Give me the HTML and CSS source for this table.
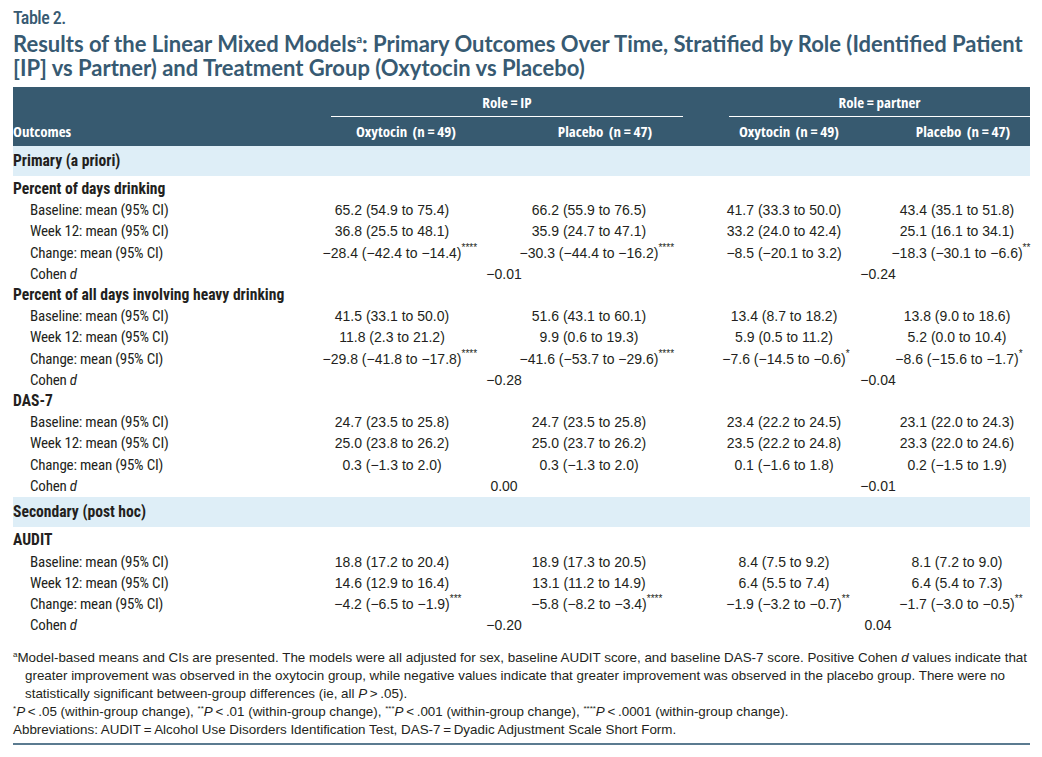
FILE: index.html
```html
<!DOCTYPE html>
<html lang="en">
<head>
<meta charset="utf-8">
<title>Table 2</title>
<link rel="stylesheet" href="styles.css">
</head>
<body>
<div class="page">
  <p class="label">Table 2.</p>
  <h1 class="title">Results of the Linear Mixed Models<sup>a</sup>: Primary Outcomes Over Time, Stratified by Role (Identified Patient<br>[IP] vs Partner) and Treatment Group (Oxytocin vs Placebo)</h1>

  <div class="table">
    <div class="thead">
      <div class="hrow top">
        <div class="grp g1">Role = IP</div>
        <div class="grp g2">Role = partner</div>
      </div>
      <div class="hrow">
        <div class="lab">Outcomes</div>
        <div class="hc c1">Oxytocin&nbsp; (n = 49)</div>
        <div class="hc c2">Placebo&nbsp; (n = 47)</div>
        <div class="hc c3">Oxytocin&nbsp; (n = 49)</div>
        <div class="hc c4">Placebo&nbsp; (n = 47)</div>
      </div>
    </div>

    <div class="band">Primary (a priori)</div>
    <div class="section">
      <div class="row"><div class="lab head">Percent of days drinking</div></div>
      <div class="row"><div class="lab sub">Baseline: mean (95% CI)</div><div class="v c1">65.2 (54.9 to 75.4)</div><div class="v c2">66.2 (55.9 to 76.5)</div><div class="v c3">41.7 (33.3 to 50.0)</div><div class="v c4">43.4 (35.1 to 51.8)</div></div>
      <div class="row"><div class="lab sub">Week 12: mean (95% CI)</div><div class="v c1">36.8 (25.5 to 48.1)</div><div class="v c2">35.9 (24.7 to 47.1)</div><div class="v c3">33.2 (24.0 to 42.4)</div><div class="v c4">25.1 (16.1 to 34.1)</div></div>
      <div class="row"><div class="lab sub">Change: mean (95% CI)</div><div class="v c1">−28.4 (−42.4 to −14.4)<span class="sig">****</span></div><div class="v c2">−30.3 (−44.4 to −16.2)<span class="sig">****</span></div><div class="v c3">−8.5 (−20.1 to 3.2)</div><div class="v c4">−18.3 (−30.1 to −6.6)<span class="sig">**</span></div></div>
      <div class="row"><div class="lab sub">Cohen <i>d</i></div><div class="v d1">−0.01</div><div class="v d2">−0.24</div></div>

      <div class="row"><div class="lab head">Percent of all days involving heavy drinking</div></div>
      <div class="row"><div class="lab sub">Baseline: mean (95% CI)</div><div class="v c1">41.5 (33.1 to 50.0)</div><div class="v c2">51.6 (43.1 to 60.1)</div><div class="v c3">13.4 (8.7 to 18.2)</div><div class="v c4">13.8 (9.0 to 18.6)</div></div>
      <div class="row"><div class="lab sub">Week 12: mean (95% CI)</div><div class="v c1">11.8 (2.3 to 21.2)</div><div class="v c2">9.9 (0.6 to 19.3)</div><div class="v c3">5.9 (0.5 to 11.2)</div><div class="v c4">5.2 (0.0 to 10.4)</div></div>
      <div class="row"><div class="lab sub">Change: mean (95% CI)</div><div class="v c1">−29.8 (−41.8 to −17.8)<span class="sig">****</span></div><div class="v c2">−41.6 (−53.7 to −29.6)<span class="sig">****</span></div><div class="v c3">−7.6 (−14.5 to −0.6)<span class="sig">*</span></div><div class="v c4">−8.6 (−15.6 to −1.7)<span class="sig">*</span></div></div>
      <div class="row"><div class="lab sub">Cohen <i>d</i></div><div class="v d1">−0.28</div><div class="v d2">−0.04</div></div>

      <div class="row"><div class="lab head">DAS-7</div></div>
      <div class="row"><div class="lab sub">Baseline: mean (95% CI)</div><div class="v c1">24.7 (23.5 to 25.8)</div><div class="v c2">24.7 (23.5 to 25.8)</div><div class="v c3">23.4 (22.2 to 24.5)</div><div class="v c4">23.1 (22.0 to 24.3)</div></div>
      <div class="row"><div class="lab sub">Week 12: mean (95% CI)</div><div class="v c1">25.0 (23.8 to 26.2)</div><div class="v c2">25.0 (23.7 to 26.2)</div><div class="v c3">23.5 (22.2 to 24.8)</div><div class="v c4">23.3 (22.0 to 24.6)</div></div>
      <div class="row"><div class="lab sub">Change: mean (95% CI)</div><div class="v c1">0.3 (−1.3 to 2.0)</div><div class="v c2">0.3 (−1.3 to 2.0)</div><div class="v c3">0.1 (−1.6 to 1.8)</div><div class="v c4">0.2 (−1.5 to 1.9)</div></div>
      <div class="row"><div class="lab sub">Cohen <i>d</i></div><div class="v d1">0.00</div><div class="v d2">−0.01</div></div>
    </div>

    <div class="band">Secondary (post hoc)</div>
    <div class="section">
      <div class="row"><div class="lab head">AUDIT</div></div>
      <div class="row"><div class="lab sub">Baseline: mean (95% CI)</div><div class="v c1">18.8 (17.2 to 20.4)</div><div class="v c2">18.9 (17.3 to 20.5)</div><div class="v c3">8.4 (7.5 to 9.2)</div><div class="v c4">8.1 (7.2 to 9.0)</div></div>
      <div class="row"><div class="lab sub">Week 12: mean (95% CI)</div><div class="v c1">14.6 (12.9 to 16.4)</div><div class="v c2">13.1 (11.2 to 14.9)</div><div class="v c3">6.4 (5.5 to 7.4)</div><div class="v c4">6.4 (5.4 to 7.3)</div></div>
      <div class="row"><div class="lab sub">Change: mean (95% CI)</div><div class="v c1">−4.2 (−6.5 to −1.9)<span class="sig">***</span></div><div class="v c2">−5.8 (−8.2 to −3.4)<span class="sig">****</span></div><div class="v c3">−1.9 (−3.2 to −0.7)<span class="sig">**</span></div><div class="v c4">−1.7 (−3.0 to −0.5)<span class="sig">**</span></div></div>
      <div class="row"><div class="lab sub">Cohen <i>d</i></div><div class="v d1">−0.20</div><div class="v d2">0.04</div></div>
    </div>
  </div>

  <div class="notes">
    <p class="note hang"><sup>a</sup>Model-based means and CIs are presented. The models were all adjusted for sex, baseline AUDIT score, and baseline DAS-7 score. Positive Cohen <i>d</i> values indicate that<br>greater improvement was observed in the oxytocin group, while negative values indicate that greater improvement was observed in the placebo group. There were no<br>statistically significant between-group differences (ie, all <i>P</i>&thinsp;&gt;&thinsp;.05).</p>
    <p class="note"><sup>*</sup><i>P</i>&thinsp;&lt;&thinsp;.05 (within-group change), <sup>**</sup><i>P</i>&thinsp;&lt;&thinsp;.01 (within-group change), <sup>***</sup><i>P</i>&thinsp;&lt;&thinsp;.001 (within-group change), <sup>****</sup><i>P</i>&thinsp;&lt;&thinsp;.0001 (within-group change).</p>
    <p class="note">Abbreviations: AUDIT&thinsp;=&thinsp;Alcohol Use Disorders Identification Test, DAS-7&thinsp;=&thinsp;Dyadic Adjustment Scale Short Form.</p>
  </div>
</div>
</body>
</html>
```

FILE: styles.css
```css
* { box-sizing: border-box; }
html, body { margin: 0; padding: 0; background: #ffffff; }
body { width: 1042px; }

.page {
  padding: 8px 12px 0 13px;
  color: #231f20;
  font-family: "Liberation Sans", Arial, sans-serif;
}

.label {
  margin: 0;
  font-family: "Roboto Condensed", "Roboto", sans-serif;
  font-stretch: 75%;
  font-weight: 500;
  font-size: 18px;
  line-height: 20px;
  letter-spacing: -0.5px;
  color: #375a72;
}

.title {
  margin: 4px 0 7px;
  font-family: "Lato", "Liberation Sans", sans-serif;
  font-weight: 700;
  font-size: 22px;
  line-height: 24px;
  color: #375a72;
  white-space: nowrap;
}
.title sup { font-size: 11px; vertical-align: 9px; line-height: 0; }

.table { width: 1017px; }

.thead {
  background: #375a70;
  color: #ffffff;
  font-family: "Open Sans", sans-serif;
  font-stretch: 75%;
  font-weight: 700;
  font-size: 15px;
}

.hrow, .row {
  display: grid;
  grid-template-columns: 318px 176px 176px 46px 150px 151px;
  align-items: center;
}
.hrow { height: 29.5px; }

.grp {
  align-self: stretch;
  display: flex;
  align-items: center;
  justify-content: center;
  padding-top: 2px;
  border-bottom: 1px solid #ffffff;
}
.g1 { grid-column: 2 / 4; }
.g2 { grid-column: 5 / 7; }

.lab { grid-column: 1; white-space: nowrap; }

.hc, .v {
  display: flex;
  justify-content: center;
  white-space: nowrap;
}
.c1 { grid-column: 2; }
.c2 { grid-column: 3; }
.c3 { grid-column: 5; }
.c4 { grid-column: 6; }
.d1 { grid-column: 2 / 4; padding-right: 6px; }
.d2 { grid-column: 5 / 7; padding-right: 3px; }

.hc.c1 { padding-right: 26px; }
.hc.c2 { padding-left: 20px; }
.hc.c3 { padding-right: 30px; }
.hc.c4 { padding-left: 17px; }

.v.c1 { padding-right: 54px; }
.v.c2 { padding-right: 12px; }
.v.c3 { padding-right: 40px; }
.v.c4 { padding-left: 5px; }

.band {
  background: #deeef7;
  height: 29.5px;
  display: flex;
  align-items: center;
  font-family: "Roboto Condensed", "Roboto", sans-serif;
  font-stretch: 75%;
  font-weight: 700;
  font-size: 15.6px;
}

.section { padding: 3px 0 1px; }

.row { height: 21.2px; font-size: 14px; }

.lab.head, .lab.sub {
  font-family: "Roboto Condensed", "Roboto", sans-serif;
  font-stretch: 75%;
}
.lab.head { font-weight: 700; font-size: 15.6px; }
.lab.sub { padding-left: 17px; font-size: 15px; letter-spacing: -0.2px; }

.sig {
  display: inline-block;
  width: 0;
  font-size: 10px;
  line-height: 1;
  position: relative;
  top: -2px;
  white-space: nowrap;
}

.notes {
  margin-top: 12px;
  padding-bottom: 4px;
  border-bottom: 2px solid #5b7b90;
  width: 1017px;
}
.note {
  margin: 0;
  font-size: 13.4px;
  line-height: 18px;
  white-space: nowrap;
}
.note.hang { padding-left: 12px; text-indent: -12px; }
.note sup { font-size: 8px; vertical-align: 5px; line-height: 0; }
```
